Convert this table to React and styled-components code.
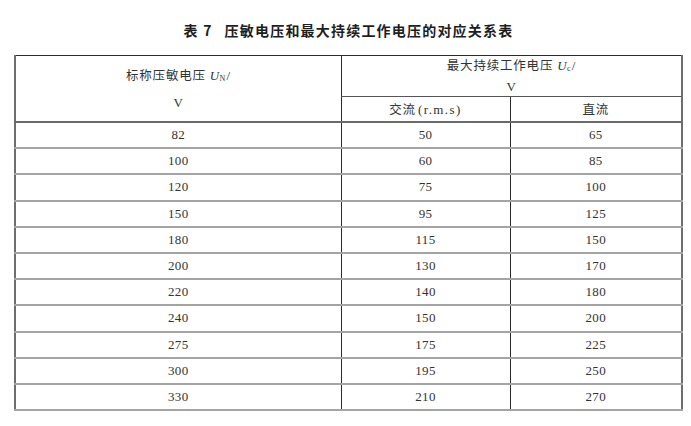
import React from "react";
import styled, { createGlobalStyle } from "styled-components";

const Global = createGlobalStyle`
  html, body { margin: 0; padding: 0; background: #fff; }
  body { width: 691px; height: 426px; overflow: hidden; }
`;

const Page = styled.div`
  width: 691px;
  padding: 20px 0 0 14px;
  box-sizing: border-box;
`;

const Title = styled.h1`
  margin: 0 0 15px 0;
  width: 669px;
  text-align: center;
  font-family: "Noto Sans CJK SC", sans-serif;
  font-weight: 700;
  font-size: 14px;
  line-height: 20px;
  letter-spacing: 1.2px;
  color: #1e1e1e;
`;

const Gap = styled.span`
  display: inline-block;
  width: ${(p) => p.$w}px;
`;

const Table = styled.table`
  width: 669px;
  border-collapse: collapse;
  table-layout: fixed;
  border-top: 1.5px solid #2a2a2a;
  border-left: 2px solid #6e6e6e;
  border-right: 2px solid #6e6e6e;
  font-family: "Liberation Serif", "Noto Sans CJK SC", serif;
  color: #333;
`;

const Cell = styled.td`
  padding: 0;
  text-align: center;
  vertical-align: middle;
  font-weight: 400;
  border-left: 1px solid #2a2a2a;
  border-bottom: 2px solid ${(p) => (p.$head ? "#6a6a6a" : "#a4a4a4")};
  font-size: 13px;
  letter-spacing: 0.3px;
  height: ${(p) => p.$h}px;
  line-height: ${(p) => p.$lh || 16}px;
  &:first-child { border-left: none; }
`;

const Cjk = styled.span`
  font-family: "Noto Sans CJK SC", sans-serif;
  font-weight: 400;
  font-size: 12.5px;
  letter-spacing: 0.8px;
  color: #333;
`;

const Spaced = styled.span`
  letter-spacing: 1.4px;
  margin-left: 2px;
`;

const Sym = styled.i`
  font-family: "Liberation Serif", serif;
  font-size: 13px;
  margin-left: 4px;
`;

const Sub = styled.sub`
  font-family: "Liberation Serif", serif;
  font-style: normal;
  font-size: 8px;
  vertical-align: -1px;
  margin-right: 1px;
`;

const rows = [
  [82, 50, 65],
  [100, 60, 85],
  [120, 75, 100],
  [150, 95, 125],
  [180, 115, 150],
  [200, 130, 170],
  [220, 140, 180],
  [240, 150, 200],
  [275, 175, 225],
  [300, 195, 250],
  [330, 210, 270],
];

export default function App() {
  return (
    <Page>
      <Global />
      <Title>
        表 7<Gap $w={12} />压敏电压和最大持续工作电压的对应关系表
      </Title>
      <Table>
        <colgroup>
          <col style={{ width: "326px" }} />
          <col style={{ width: "169px" }} />
          <col style={{ width: "172px" }} />
        </colgroup>
        <thead>
          <tr>
            <Cell as="th" rowSpan={2} $head $h={40} $lh={24}>
              <Cjk>标称压敏电压</Cjk>
              <Sym>U</Sym>
              <Sub>N</Sub>/
              <br />V
            </Cell>
            <Cell as="th" colSpan={2} $h={39} $lh={18} style={{ borderBottomColor: "#555", borderBottomWidth: "1px" }}>
              <Cjk>最大持续工作电压</Cjk>
              <Sym>U</Sym>
              <Sub>c</Sub>/
              <br />V
            </Cell>
          </tr>
          <tr>
            <Cell as="th" $head $h={24} style={{ borderLeft: "1px solid #2a2a2a" }}>
              <Cjk>交流</Cjk>
              <Spaced>(r.m.s)</Spaced>
            </Cell>
            <Cell as="th" $head $h={24}>
              <Cjk>直流</Cjk>
            </Cell>
          </tr>
        </thead>
        <tbody>
          {rows.map((r) => (
            <tr key={r[0]}>
              {r.map((v, i) => (
                <Cell key={i} $h={24.2}>
                  {v}
                </Cell>
              ))}
            </tr>
          ))}
        </tbody>
      </Table>
    </Page>
  );
}
